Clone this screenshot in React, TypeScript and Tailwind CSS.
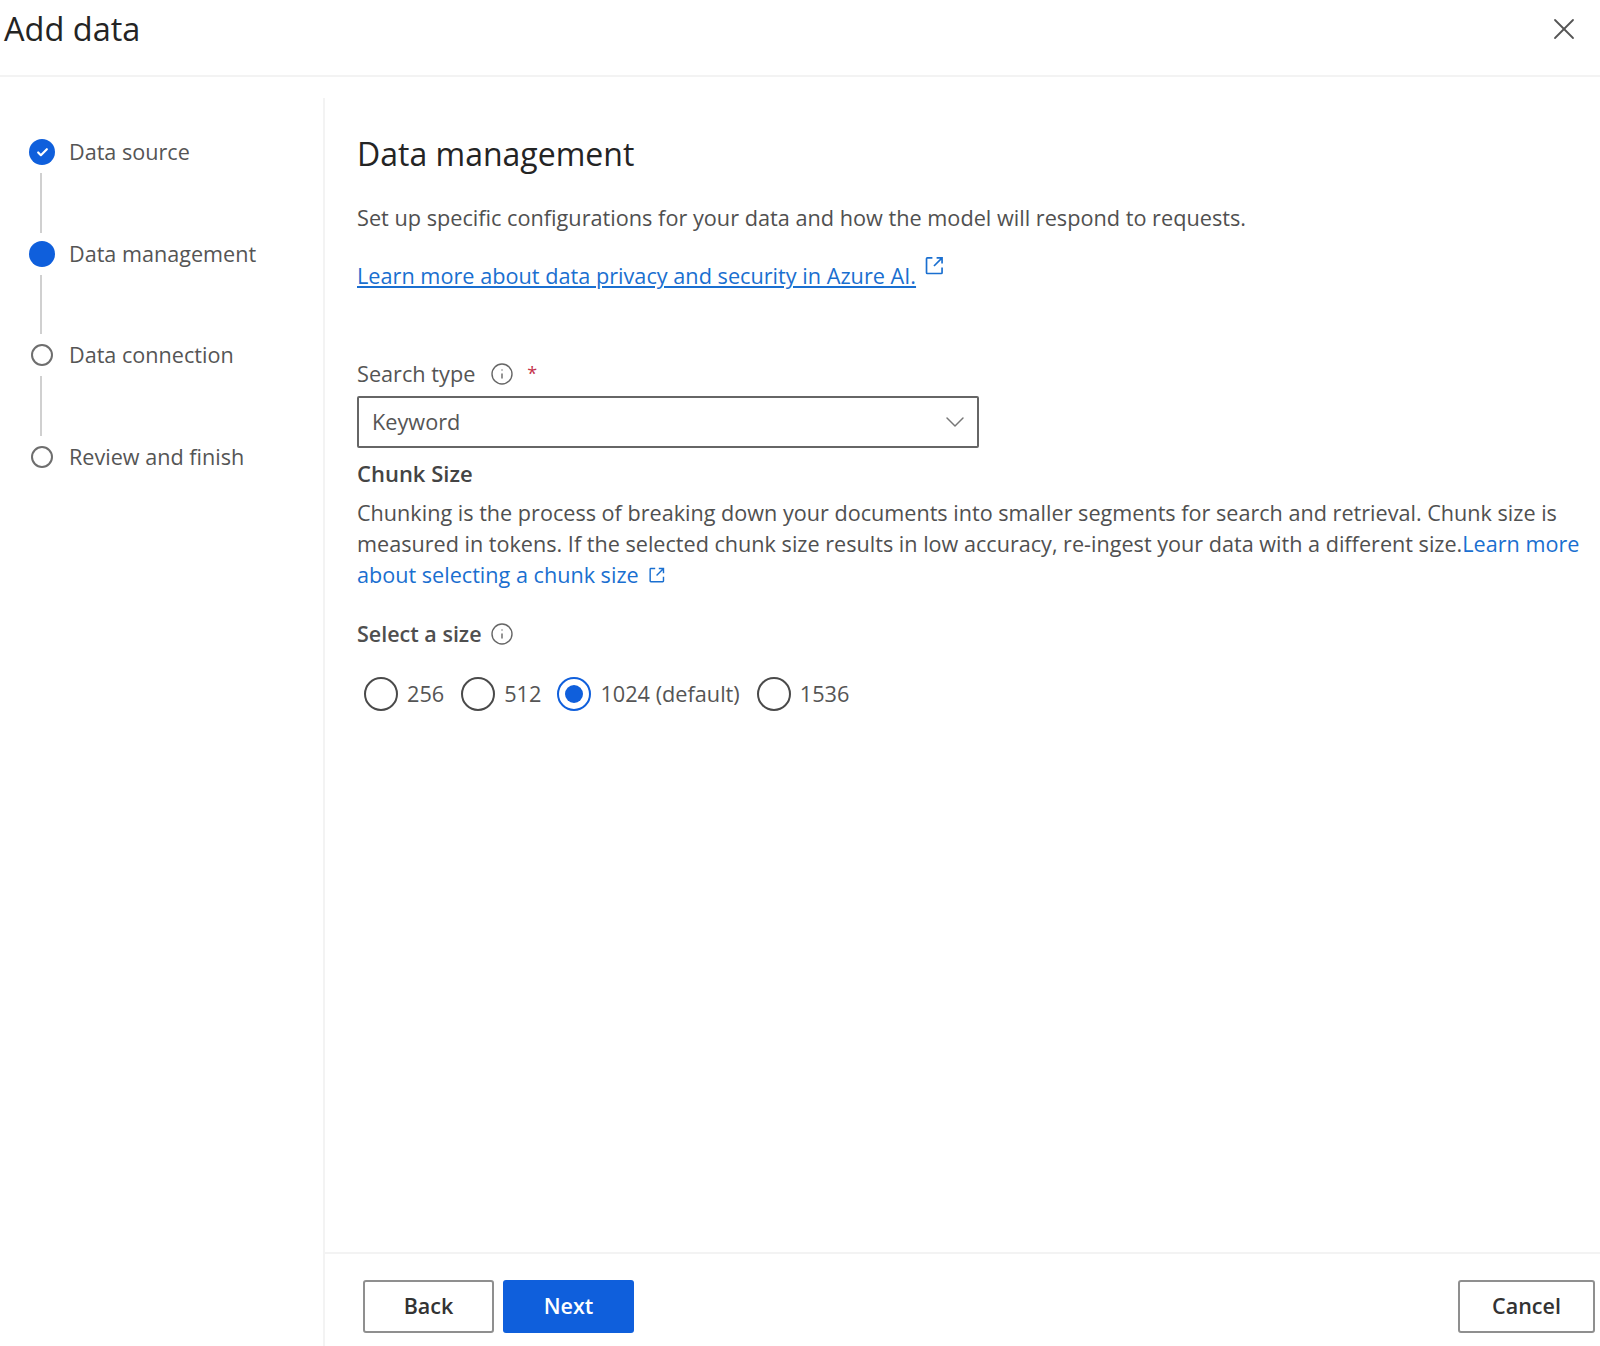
import { X, ChevronDown, Check, Info } from 'lucide-react';

const font = 'font-["Open_Sans","Noto_Sans",sans-serif]';

const steps = [
  { label: 'Data source', state: 'done' },
  { label: 'Data management', state: 'current' },
  { label: 'Data connection', state: 'todo' },
  { label: 'Review and finish', state: 'todo' },
];

const sizes = [
  { label: '256', gap: 'mr-[17px]' },
  { label: '512', gap: 'mr-[16px]' },
  { label: '1024 (default)', gap: 'mr-[17px]', checked: true },
  { label: '1536', gap: '' },
];

function ExternalIcon({ className }: { className: string }) {
  return (
    <svg viewBox="0 0 20 20" fill="none" stroke="currentColor" strokeWidth="1.6" className={className}>
      <path d="M8 2.8H3.2a.8.8 0 0 0-.8.8v13.2c0 .4.4.8.8.8h13.2c.4 0 .8-.4.8-.8V12" />
      <path d="M12 2.8h5.2V8M17 3l-7.5 7.5" />
    </svg>
  );
}

function StepDot({ state }: { state: string }) {
  if (state === 'done') {
    return (
      <div className="w-[26px] h-[26px] rounded-full bg-[#0f5fdc] flex items-center justify-center">
        <Check className="w-[13px] h-[13px] text-white" strokeWidth={4} />
      </div>
    );
  }
  if (state === 'current') {
    return <div className="w-[26px] h-[26px] rounded-full bg-[#0f5fdc]" />;
  }
  return (
    <div className="w-[26px] h-[26px] flex items-center justify-center">
      <div className="w-[22px] h-[22px] rounded-full border-2 border-[#6e6e6e]" />
    </div>
  );
}

function Sidebar() {
  return (
    <aside className="w-[325px] flex-shrink-0 mt-[21px] border-r-2 border-[#f3f3f3] pl-[29px] pt-[41px]">
      {steps.map((step, i) => (
        <div key={step.label}>
          <div className="flex items-center h-[26px]">
            <StepDot state={step.state} />
            <span className="ml-[14px] text-[21.6px] leading-[26px] text-[#555555]">{step.label}</span>
          </div>
          {i < steps.length - 1 && (
            <div className="w-[2px] h-[59.6px] bg-[#d0d0d0] ml-[11px] my-[8px]" />
          )}
        </div>
      ))}
    </aside>
  );
}

function Radio({ checked }: { checked?: boolean }) {
  return (
    <div
      className={
        'w-[34px] h-[34px] rounded-full border-2 flex items-center justify-center flex-shrink-0 ' +
        (checked ? 'border-[#0f5fdc]' : 'border-[#4a4a4a]')
      }
    >
      {checked && <div className="w-[18px] h-[18px] rounded-full bg-[#0f5fdc]" />}
    </div>
  );
}

function MainPanel() {
  return (
    <main className="flex-1 flex flex-col min-w-0">
      <div className="flex-1 pl-[32px] pr-[14px] pt-[57px]">
        <h2 className="text-[32px] leading-[40px] font-medium text-[#242424]">Data management</h2>

        <p className="mt-[29px] text-[21.7px] leading-[30px] text-[#505050]">
          Set up specific configurations for your data and how the model will respond to requests.
        </p>

        <div className="mt-[28px] flex items-start h-[30px]">
          <a className="text-[21.7px] leading-[30px] text-[#1a6fd0] underline">
            Learn more about data privacy and security in Azure AI.
          </a>
          <ExternalIcon className="w-[21px] h-[21px] ml-[8px] -mt-[6px] text-[#1a6fd0]" />
        </div>

        <div className="mt-[68px] flex items-center h-[30px] text-[21.7px] text-[#555555]">
          <span>Search type</span>
          <Info className="w-[24px] h-[24px] ml-[15px] text-[#666666]" strokeWidth={1.4} />
          <span className="ml-[13px] -mt-[2px] text-[#c4314b] text-[18px]">*</span>
        </div>

        <div className="mt-[7px] w-[622px] h-[52px] border-2 border-[#666666] rounded-[2px] flex items-center justify-between pl-[13px] pr-[6px]">
          <span className="text-[21.7px] text-[#555555]">Keyword</span>
          <ChevronDown className="w-[32px] h-[32px] text-[#777777]" strokeWidth={1.1} />
        </div>

        <h3 className="mt-[10px] text-[22px] leading-[30px] font-semibold text-[#444444]">Chunk Size</h3>

        <p className="mt-[9px] text-[21.62px] leading-[31px] text-[#505050]">
          Chunking is the process of breaking down your documents into smaller segments for search and retrieval. Chunk size is
          measured in tokens. If the selected chunk size results in low accuracy, re-ingest your data with a different size.
          <a className="text-[#1a6fd0]">Learn more</a>{' '}
          <a className="text-[#1a6fd0]">
            about selecting a chunk size
            <ExternalIcon className="inline-block w-[18px] h-[18px] ml-[9px] -mt-[4px] text-[#1a6fd0]" />
          </a>
        </p>

        <div className="mt-[29px] flex items-center h-[30px] text-[21.5px] font-semibold text-[#4f4f4f]">
          <span>Select a size</span>
          <Info className="w-[24px] h-[24px] ml-[8px] text-[#666666]" strokeWidth={1.4} />
        </div>

        <div className="mt-[27px] ml-[7px] flex items-center h-[36px]">
          {sizes.map((s) => (
            <div key={s.label} className={'flex items-center ' + s.gap}>
              <Radio checked={s.checked} />
              <span className="ml-[9px] text-[21.7px] text-[#555555]">{s.label}</span>
            </div>
          ))}
        </div>
      </div>

      <footer className="h-[94px] border-t-2 border-[#f3f3f3] flex items-start justify-between pt-[26px] pl-[38px] pr-[5px]">
        <div className="flex gap-[9px]">
          <button className="w-[131px] h-[53px] border-2 border-[#8f8f8f] rounded-[3px] bg-white text-[21.5px] font-semibold text-[#333333]">
            Back
          </button>
          <button className="w-[131px] h-[53px] rounded-[3px] bg-[#0f5fdc] text-[21.5px] font-semibold text-white">
            Next
          </button>
        </div>
        <button className="w-[137px] h-[53px] border-2 border-[#8f8f8f] rounded-[3px] bg-white text-[21.5px] font-semibold text-[#333333]">
          Cancel
        </button>
      </footer>
    </main>
  );
}

export default function App() {
  return (
    <div className={'w-[1600px] h-[1346px] bg-white flex flex-col overflow-hidden ' + font}>
      <header className="h-[77px] flex-shrink-0 border-b-2 border-[#f3f3f3] flex items-start justify-between pl-[4px] pr-[18px] pt-[7px]">
        <h1 className="text-[32.5px] leading-[44px] text-[#242424]">Add data</h1>
        <X className="w-[36px] h-[36px] mt-[4px] text-[#555555]" strokeWidth={1.2} />
      </header>
      <div className="flex-1 flex min-h-0">
        <Sidebar />
        <MainPanel />
      </div>
    </div>
  );
}
